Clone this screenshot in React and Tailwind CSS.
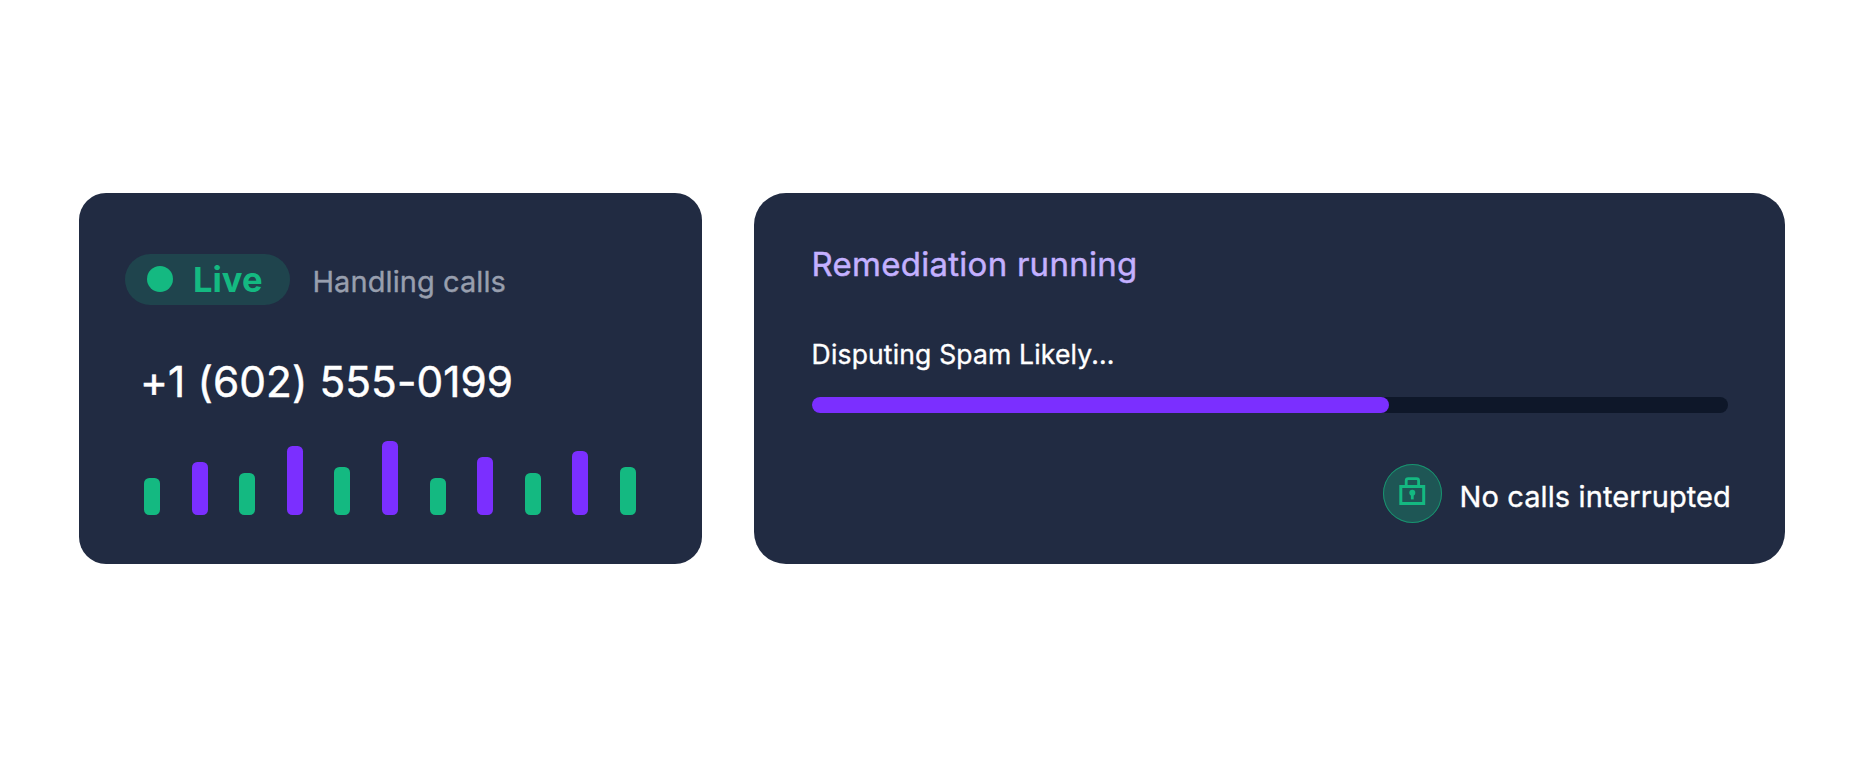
const bars = [37, 53, 42.3, 69, 47.6, 74, 37, 58.2, 42.3, 63.5, 47.6];

const LockIcon = () => {
    return (
        <svg className="w-[59px] h-[59px]" viewBox="0 0 59 59" fill="none">
            <path d="M23.2 21.5V16.7Q23.2 14.7 25.2 14.7H33.6Q35.6 14.7 35.6 16.7V21.5" stroke="#14b981" strokeWidth="2.8" />
            <rect x="17.8" y="22.5" width="22.9" height="17" stroke="#14b981" strokeWidth="3" />
            <circle cx="29.3" cy="28.8" r="3" fill="#14b981" />
            <path d="M29.3 29V35.4" stroke="#14b981" strokeWidth="2.8" />
        </svg>
    );
};

const CallCard = () => {
    return (
        <div className="w-[622.5px] h-[371px] rounded-[27px] bg-[#212b42] pt-[60.7px] pl-[46px]">
            <div className="flex">
                <div className="w-[165.3px] h-[51px] rounded-full bg-[#1f444d] flex pl-[22px] pt-[12.5px]">
                    <div className="w-[26px] h-[26px] rounded-full bg-[#14b981]" />
                    <div className="ml-[20px] -mt-[3.5px] h-[34px] text-[34.5px] leading-[34px] font-bold text-[#14b981] whitespace-nowrap">
                        Live
                    </div>
                </div>
                <div className="ml-[22.2px] mt-[13.3px] text-[29px] leading-[29px] tracking-[0.08px] [-webkit-text-stroke:0.35px] text-[#989fae] whitespace-nowrap">
                    Handling calls
                </div>
            </div>
            <div className="ml-[15px] mt-[56px] h-[42px] text-[42.3px] leading-[42px] tracking-[0.1px] [-webkit-text-stroke:0.5px] text-white whitespace-nowrap">
                +1 (602) 555-0199
            </div>
            <div className="ml-[19px] mt-[38.3px] h-[74px] flex items-end gap-[31.6px]">
                {bars.map((height, i) => (
                    <div
                        key={i}
                        className={`w-4 rounded-[5.3px] ${i % 2 ? "bg-[#7b2fff]" : "bg-[#14b981]"}`}
                        style={{ height }}
                    />
                ))}
            </div>
        </div>
    );
};

const RemediationCard = () => {
    return (
        <div className="w-[1031.3px] h-[371px] rounded-[32px] bg-[#212b42] pt-[54px] pl-[58px]">
            <div className="h-[34px] text-[33px] leading-[34px] tracking-[0.26px] [-webkit-text-stroke:0.45px] text-[#c4b0ff] whitespace-nowrap">
                Remediation running
            </div>
            <div className="mt-[60px] h-[27px] text-[26.5px] leading-[27px] tracking-[0.17px] [-webkit-text-stroke:0.35px] text-white whitespace-nowrap">
                Disputing Spam Likely...
            </div>
            <div className="mt-[29px] w-[916px] h-[16.3px] rounded-full bg-[#0e1729]">
                <div className="w-[577.5px] h-full rounded-full bg-[#7b2fff]" />
            </div>
            <div className="mt-[50.7px] ml-[571px] flex">
                <div className="w-[59px] h-[59px] rounded-full bg-[#1e5655] shadow-[inset_0_0_0_1px_#189470]">
                    <LockIcon />
                </div>
                <div className="ml-[18px] mt-[18px] text-[29px] leading-[29px] tracking-[0.1px] [-webkit-text-stroke:0.35px] text-white whitespace-nowrap">
                    No calls interrupted
                </div>
            </div>
        </div>
    );
};

export default function App() {
    return (
        <div className="w-full h-[758px] bg-white pt-[193px] pl-[79px] flex items-start gap-[52.1px] font-['Inter',sans-serif]">
            <CallCard />
            <RemediationCard />
        </div>
    );
}
